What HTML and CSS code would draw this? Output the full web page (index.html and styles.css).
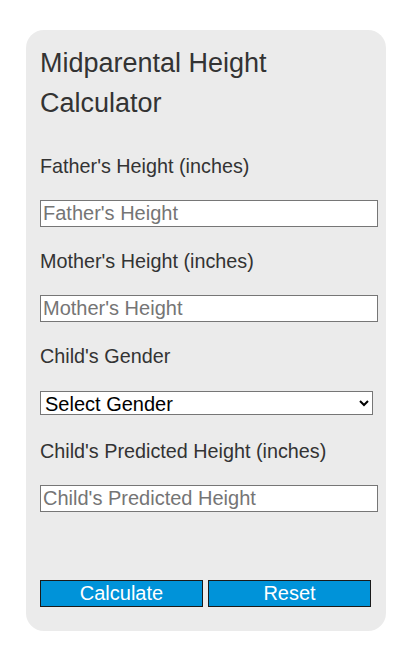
FILE: index.html
```html
<!DOCTYPE html>
<html lang="en">
<head>
<meta charset="utf-8">
<title>Midparental Height Calculator</title>
<link rel="stylesheet" href="styles.css">
</head>
<body>
<div class="card">
  <h1 class="title">Midparental Height Calculator</h1>
  <label class="label" for="father">Father's Height (inches)</label>
  <input class="field" id="father" type="text" placeholder="Father's Height">
  <label class="label" for="mother">Mother's Height (inches)</label>
  <input class="field" id="mother" type="text" placeholder="Mother's Height">
  <label class="label" for="gender">Child's Gender</label>
  <select class="select" id="gender">
    <option>Select Gender</option>
    <option>Male</option>
    <option>Female</option>
  </select>
  <label class="label" for="child">Child's Predicted Height (inches)</label>
  <input class="field" id="child" type="text" placeholder="Child's Predicted Height">
  <div class="actions">
    <button class="btn" type="button">Calculate</button>
    <button class="btn" type="button">Reset</button>
  </div>
</div>
</body>
</html>
```
FILE: styles.css
```css
html, body {
  margin: 0;
  padding: 0;
  background: #ffffff;
}
body {
  font-family: "Liberation Sans", Arial, sans-serif;
  color: #333333;
}
.card {
  box-sizing: border-box;
  width: 360px;
  margin: 30px 0 0 26px;
  padding: 13px 0 24px 14px;
  background: #ebebeb;
  border-radius: 18px;
  display: flex;
  flex-direction: column;
  align-items: flex-start;
}
.title {
  margin: 0;
  font-size: 27px;
  font-weight: normal;
  line-height: 40px;
  color: #333333;
  width: 300px;
}
.label {
  display: block;
  font-size: 19.8px;
  line-height: 23px;
  color: #333333;
  margin-top: 32px;
}
.field + .label {
  margin-top: 23px;
}
.select + .label {
  margin-top: 25px;
}
.field {
  box-sizing: border-box;
  width: 338px;
  height: 27px;
  margin: 22px 0 0 0;
  padding: 1px 2px;
  border: 1px solid #767676;
  border-radius: 0;
  background: #ffffff;
  font-family: "Liberation Sans", Arial, sans-serif;
  font-size: 20px;
  color: #000;
  outline: none;
}
.field::placeholder {
  color: #757575;
  opacity: 1;
}
.select {
  box-sizing: border-box;
  width: 333px;
  height: 24px;
  margin: 23px 0 0 0;
  padding: 0;
  border: 1px solid #767676;
  border-radius: 0;
  background-color: #ffffff;
  font-family: "Liberation Sans", Arial, sans-serif;
  font-size: 20px;
  color: #000;
}
.actions {
  display: flex;
  gap: 5px;
  margin-top: 68px;
}
.btn {
  box-sizing: border-box;
  width: 163px;
  height: 27px;
  margin: 0;
  padding: 0;
  border: 1px solid #1a1a1a;
  border-radius: 0;
  background: #0093d9;
  color: #ffffff;
  font-family: "Liberation Sans", Arial, sans-serif;
  font-size: 20px;
  line-height: 25px;
}
```
